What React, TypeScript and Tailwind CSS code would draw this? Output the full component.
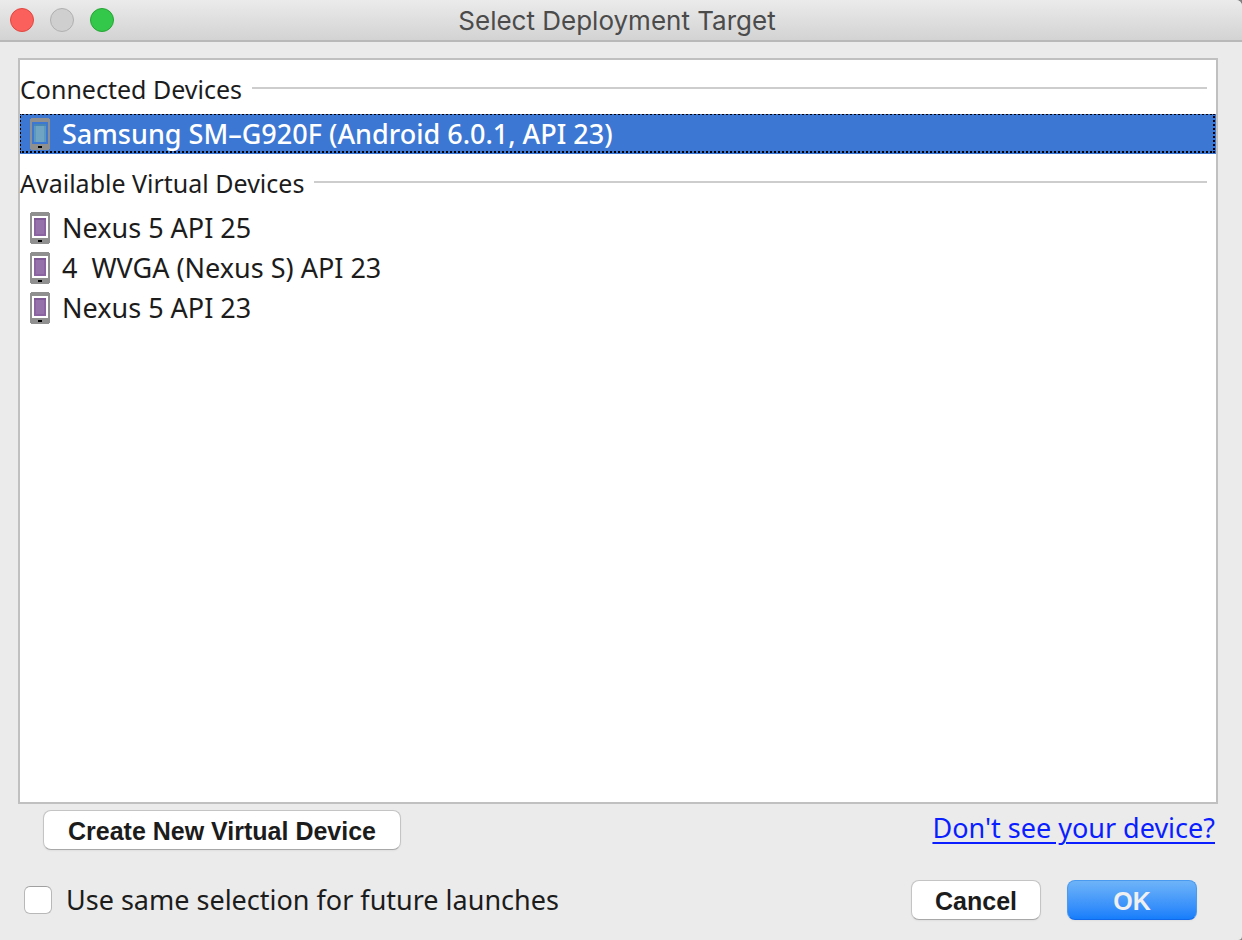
import { useState } from 'react';

type Device = {
  id: string;
  name: string;
};

const connectedDevices: Device[] = [
  { id: 'samsung', name: 'Samsung SM–G920F (Android 6.0.1, API 23)' },
];

const virtualDevices: Device[] = [
  { id: 'nexus-5-25', name: 'Nexus 5 API 25' },
  { id: 'wvga-23', name: '4  WVGA (Nexus S) API 23' },
  { id: 'nexus-5-23', name: 'Nexus 5 API 23' },
];

function PhoneIcon({ virtual }: { virtual: boolean }) {
  return (
    <svg width="20" height="32" viewBox="0 0 20 32" className="shrink-0" shapeRendering="crispEdges" aria-hidden="true">
      <path
        d="M1 0h18v1h1v30h-1v1H1v-1H0V1h1zM2 4v22h16V4z"
        fill="#8f8f8f"
        fillRule="evenodd"
      />
      {virtual ? (
        <>
          <rect x="4" y="6" width="12" height="18" fill="#8a63a0" />
          <rect x="6" y="8" width="8" height="14" fill="#9672ab" />
          <rect x="4" y="6" width="12" height="2" fill="#7d5895" />
        </>
      ) : (
        <>
          <rect x="4" y="6" width="12" height="18" fill="#5c98bd" />
          <rect x="6" y="8" width="8" height="16" fill="#6fa5c3" />
          <rect x="4" y="6" width="12" height="2" fill="#4586b4" />
        </>
      )}
      <rect x="8" y="28" width="4" height="2" fill="#000" />
    </svg>
  );
}

function SectionHeader({ title }: { title: string }) {
  return (
    <div className="flex h-[54px] items-center pt-0.5 pr-[9px]">
      <h2 className="pt-0.5 pr-2.5 text-[25px] leading-8 whitespace-nowrap">{title}</h2>
      <div className="h-0.5 grow bg-[#cdcdcd]" />
    </div>
  );
}

function DeviceRow({
  device,
  virtual,
  selected,
  onSelect,
}: {
  device: Device;
  virtual: boolean;
  selected: boolean;
  onSelect: (id: string) => void;
}) {
  return (
    <li>
      <button
        type="button"
        aria-pressed={selected}
        onClick={() => onSelect(device.id)}
        className={`relative flex h-10 w-full items-center gap-3 overflow-hidden pl-2.5 text-left text-[27px] leading-10 outline-none ${
          selected ? 'bg-[#3c77d4] font-medium text-white' : ''
        }`}
      >
        <PhoneIcon virtual={virtual} />
        <span className="whitespace-pre">{device.name}</span>
        {selected && (
          <span className="absolute -top-px right-px bottom-px -left-px border-2 border-dotted border-black" />
        )}
      </button>
    </li>
  );
}

export default function App() {
  const [selectedId, setSelectedId] = useState('samsung');
  const [remember, setRemember] = useState(false);

  return (
    <div className="flex min-h-screen flex-col bg-[#808080] font-['Noto_Sans',sans-serif] text-[#1c1c1c]">
      <div className="flex grow flex-col overflow-hidden rounded-tr-md rounded-br-sm bg-[#ebebeb]">
        {/* Title bar */}
        <header className="grid h-[42px] grid-cols-[1fr_auto_1fr] items-center border-b-2 border-[#b9b9b9] bg-linear-to-b from-[#ebebeb] to-[#d3d3d3] pr-[18px] pl-2.5">
          <div className="flex gap-4">
            <button type="button" aria-label="Close" className="size-6 rounded-full border border-[#e2463f] bg-[#fc605c]" />
            <button type="button" aria-label="Minimize" disabled className="size-6 rounded-full border border-[#b0b0b0] bg-[#cfcfcf]" />
            <button type="button" aria-label="Zoom" className="size-6 rounded-full border border-[#25a534] bg-[#34c84a]" />
          </div>
          <h1 className="pt-0.5 font-[Inter,sans-serif] text-[26px] leading-8 text-[#4b4b4b]">Select Deployment Target</h1>
        </header>

        <main className="flex grow flex-col pt-4">
          <div className="mr-6 ml-[18px] grow border-2 border-[#c0c0c0] bg-white">
            <SectionHeader title="Connected Devices" />
            <ul>
              {connectedDevices.map((device) => (
                <DeviceRow
                  key={device.id}
                  device={device}
                  virtual={false}
                  selected={device.id === selectedId}
                  onSelect={setSelectedId}
                />
              ))}
            </ul>
            <SectionHeader title="Available Virtual Devices" />
            <ul>
              {virtualDevices.map((device) => (
                <DeviceRow
                  key={device.id}
                  device={device}
                  virtual
                  selected={device.id === selectedId}
                  onSelect={setSelectedId}
                />
              ))}
            </ul>
          </div>

          <div className="flex items-start justify-between pt-1.5 pr-[27px] pl-[43px]">
            <button
              type="button"
              className="h-10 rounded-lg border border-[#c4c4c4] border-b-[#a8a8a8] bg-white px-6 pt-0.5 font-['Liberation_Sans',sans-serif] text-[25px] leading-9 font-bold shadow-xs"
            >
              Create New Virtual Device
            </button>
            <a href="#" className="pt-0.5 text-[27px] leading-8 text-[#0a1eff] underline decoration-2 underline-offset-4">
              Don't see your device?
            </a>
          </div>
        </main>

        {/* Footer */}
        <footer className="flex items-center justify-between pt-[30px] pr-[45px] pb-5 pl-6">
          <label className="flex items-center gap-3.5 text-[27px] leading-10">
            <input
              type="checkbox"
              checked={remember}
              onChange={(e) => setRemember(e.target.checked)}
              className="size-7 appearance-none rounded-md border border-[#b8b8b8] border-t-[#a0a0a0] bg-white checked:bg-[#3c77d4]"
            />
            Use same selection for future launches
          </label>
          <div className="flex gap-[26px] font-['Liberation_Sans',sans-serif] text-[25px] leading-9 font-bold">
            <button type="button" className="h-10 w-[130px] rounded-lg border border-[#c4c4c4] border-b-[#a8a8a8] bg-white pt-0.5 shadow-xs">
              Cancel
            </button>
            <button
              type="button"
              className="h-10 w-[130px] rounded-lg border border-[#4a9af0] border-b-[#1068ea] bg-linear-to-b from-[#6db3f8] to-[#167efb] pt-0.5 text-[#f0f0f0] shadow-xs"
            >
              OK
            </button>
          </div>
        </footer>
      </div>
    </div>
  );
}
